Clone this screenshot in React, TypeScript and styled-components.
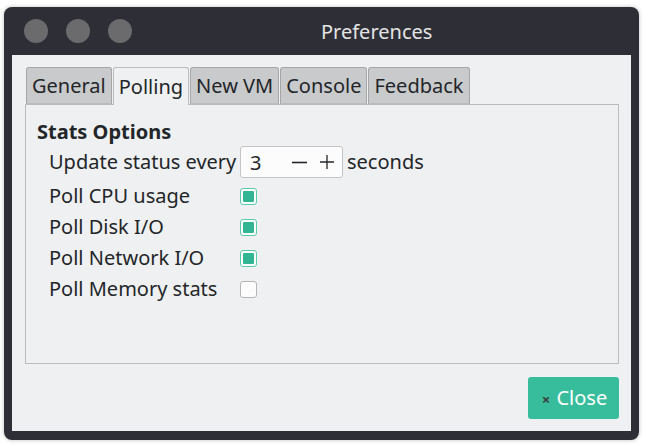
import styled, { createGlobalStyle } from 'styled-components';

const GlobalStyle = createGlobalStyle`
     html, body {
          margin: 0;
          background: #ffffff;
          font-family: 'Noto Sans', 'Open Sans', sans-serif;
     }
`;

const Screen = styled.div`
     width: 646px;
     height: 445px;
     box-sizing: border-box;
     padding: 7px 7px 5px 4px;
`;

const Window = styled.div`
     height: 100%;
     display: flex;
     flex-direction: column;
     background: #2e2f36;
     border-radius: 8px;
     padding: 0 8px 9px 8px;
     box-sizing: border-box;
     box-shadow: 0 0 4px rgba(0, 0, 0, 0.25);
`;

const TitleBar = styled.div`
     height: 48px;
     display: flex;
     align-items: center;
     position: relative;
     padding-left: 12px;
     gap: 18px;
`;

const Light = styled.span`
     width: 24px;
     height: 24px;
     border-radius: 50%;
     background: #6b6b6e;
`;

const Title = styled.div`
     position: absolute;
     left: 309px;
     top: 11px;
     color: #e4e4e4;
     font-size: 20px;
`;

const Body = styled.div`
     flex: 1;
     background: #eff0f1;
     display: flex;
     flex-direction: column;
     padding: 12px 12px 12px 13px;
`;

const TabBar = styled.div`
     display: flex;
     margin-left: 1px;
     height: 37px;
     align-items: flex-end;
`;

const Tab = styled.div<{ $active?: boolean }>`
     height: 37px;
     box-sizing: border-box;
     padding: 0 5px;
     display: flex;
     align-items: center;
     font-size: 20px;
     color: #232629;
     border: 1px solid ${(p) => (p.$active ? '#bcbcbc' : '#a6a6a6')};
     border-bottom: ${(p) => (p.$active ? 'none' : '1px solid #bcbcbc')};
     border-radius: 3px 3px 0 0;
     background: ${(p) => (p.$active ? '#eff0f1' : '#c9cacc')};
     margin-right: 1px;
     position: relative;
     z-index: ${(p) => (p.$active ? 2 : 1)};
     ${(p) => (p.$active ? 'height: 38px; margin-bottom: -1px;' : '')}
`;

const Panel = styled.div`
     height: 260px;
     box-sizing: border-box;
     border: 1px solid #bcbcbc;
     padding: 14px 11px;
`;

const GroupTitle = styled.div`
     font-weight: 700;
     font-size: 20px;
     color: #232629;
     line-height: 26px;
`;

const Grid = styled.div`
     display: grid;
     grid-template-columns: 191px auto;
     row-gap: 5px;
     padding-left: 12px;
     margin-top: 1px;
     align-items: center;
`;

const Label = styled.div`
     font-size: 20px;
     color: #232629;
     line-height: 26px;
`;

const Inline = styled.div`
     display: flex;
     align-items: center;
     gap: 4px;
`;

const SpinBox = styled.div`
     width: 103px;
     height: 32px;
     box-sizing: border-box;
     border: 1px solid #c3c4c6;
     border-radius: 3px;
     background: #fcfcfc;
     display: flex;
     align-items: center;
     padding: 0 8px 0 9px;
     font-size: 20px;
     color: #232629;
`;

const SpinValue = styled.span`
     flex: 1;
`;

const SpinButtons = styled.span`
     display: flex;
     gap: 13px;
     align-items: center;
`;

const Check = styled.span<{ $on?: boolean }>`
     width: 17px;
     height: 17px;
     box-sizing: border-box;
     border-radius: 3px;
     border: 1px solid ${(p) => (p.$on ? '#5ccaae' : '#b4b5b7')};
     background: #fcfcfc;
     padding: 2px;
     display: flex;
     &::after {
          content: '';
          flex: 1;
          background: ${(p) => (p.$on ? '#32b592' : 'transparent')};
          border-radius: 1px;
     }
`;

const Footer = styled.div`
     flex: 1;
     display: flex;
     justify-content: flex-end;
     align-items: flex-end;
`;

const CloseButton = styled.button`
     width: 91px;
     height: 42px;
     border: none;
     border-radius: 3px;
     background: #37bd9c;
     color: #ffffff;
     font-family: 'Noto Sans', 'Open Sans', sans-serif;
     font-size: 20px;
     display: flex;
     align-items: center;
     justify-content: center;
     gap: 6px;
     padding: 0 0 2px 2px;
     span {
          color: #3a3d40;
          font-size: 15px;
          font-weight: 700;
          margin-top: 4px;
     }
`;

const Minus = () => (
     <svg width="15" height="15" viewBox="0 0 15 15">
          <path d="M0 7.5h15" stroke="#232629" strokeWidth="1.6" />
     </svg>
);

const Plus = () => (
     <svg width="14" height="14" viewBox="0 0 14 14">
          <path d="M0 7h14M7 0v14" stroke="#232629" strokeWidth="1.3" />
     </svg>
);

const tabs = ['General', 'Polling', 'New VM', 'Console', 'Feedback'];

const options = [
     { label: 'Poll CPU usage', on: true },
     { label: 'Poll Disk I/O', on: true },
     { label: 'Poll Network I/O', on: true },
     { label: 'Poll Memory stats', on: false },
];

export default function App() {
     return (
          <>
               <GlobalStyle />
               <Screen>
                    <Window>
                         <TitleBar>
                              <Light />
                              <Light />
                              <Light />
                              <Title>Preferences</Title>
                         </TitleBar>
                         <Body>
                              <TabBar>
                                   {tabs.map((t) => (
                                        <Tab key={t} $active={t === 'Polling'}>
                                             {t}
                                        </Tab>
                                   ))}
                              </TabBar>
                              <Panel>
                                   <GroupTitle>Stats Options</GroupTitle>
                                   <Grid>
                                        <Label>Update status every</Label>
                                        <Inline>
                                             <SpinBox>
                                                  <SpinValue>3</SpinValue>
                                                  <SpinButtons>
                                                       <Minus />
                                                       <Plus />
                                                  </SpinButtons>
                                             </SpinBox>
                                             <Label>seconds</Label>
                                        </Inline>
                                        {options.flatMap((o) => [
                                             <Label key={o.label}>{o.label}</Label>,
                                             <Check key={o.label + '-c'} $on={o.on} />,
                                        ])}
                                   </Grid>
                              </Panel>
                              <Footer>
                                   <CloseButton>
                                        <span>×</span>Close
                                   </CloseButton>
                              </Footer>
                         </Body>
                    </Window>
               </Screen>
          </>
     );
}
